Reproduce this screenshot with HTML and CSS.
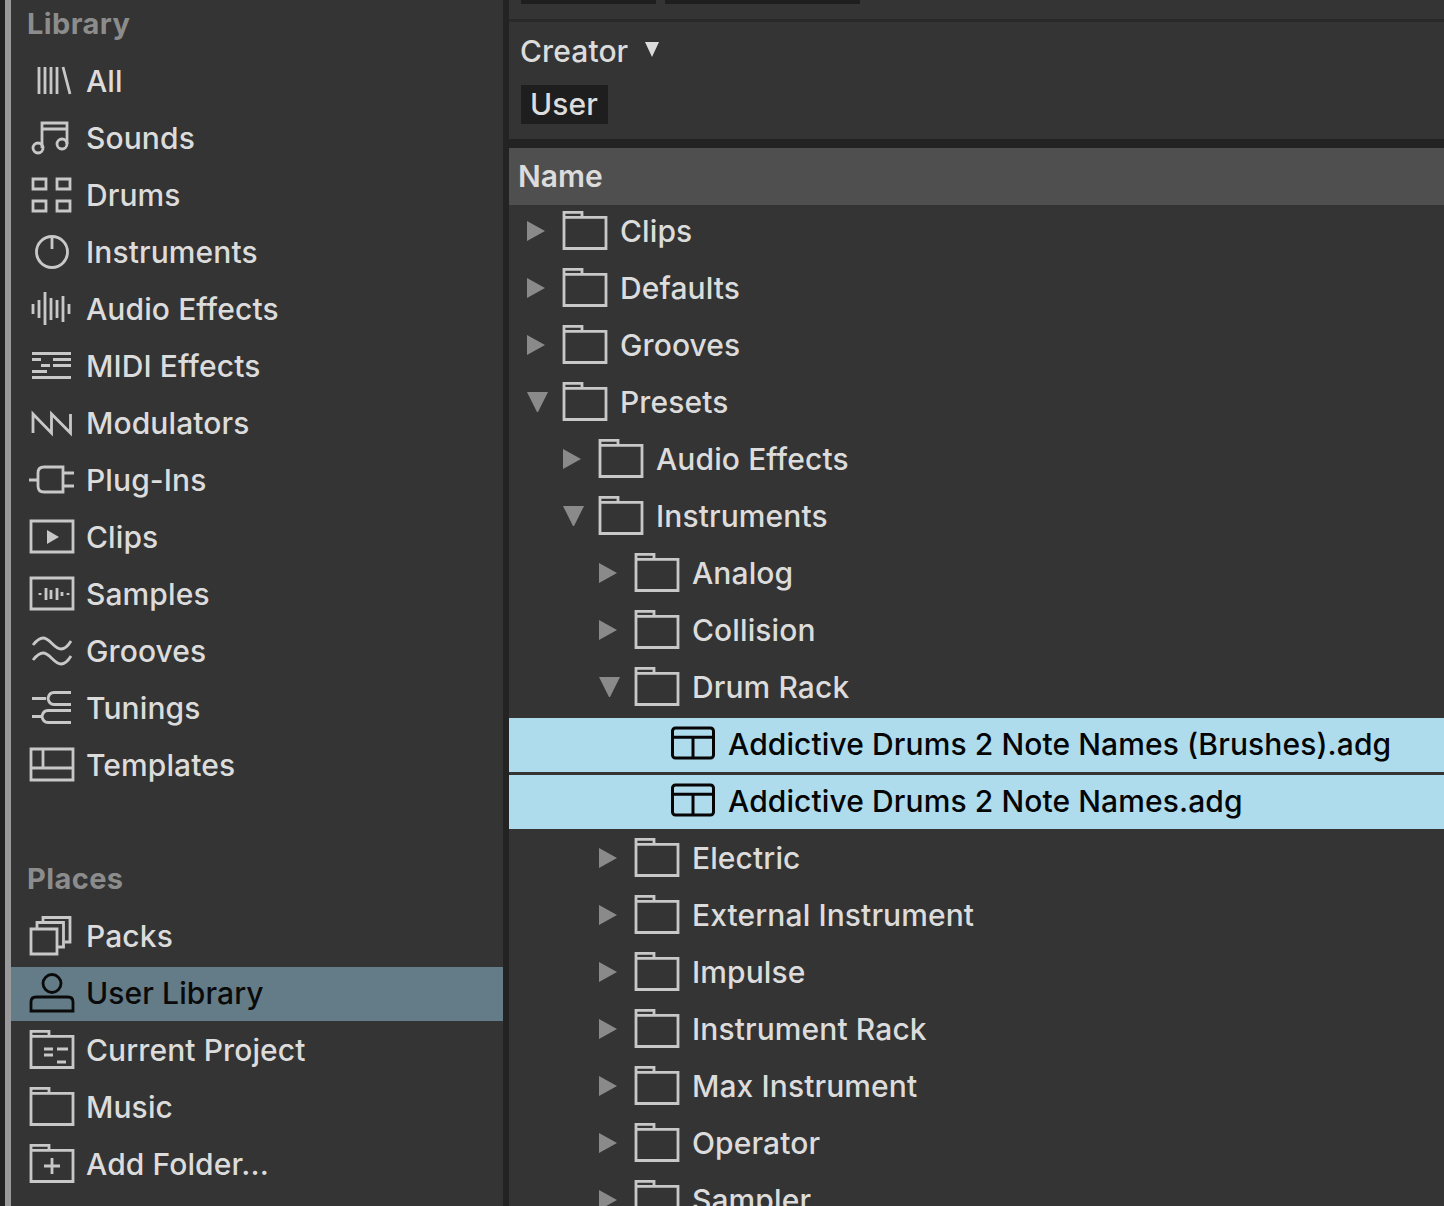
FILE: index.html
```html
<!DOCTYPE html>
<html lang="en">
<head>
  <meta charset="UTF-8" />
  <title>Browser</title>
  <link rel="stylesheet" href="styles.css">
</head>
<body>
  <svg class="defs" width="0" height="0">
    <symbol id="i-all" viewBox="0 0 44 40" overflow="visible"><path d="M9 6v27M15 6v27M21 6v27M27 6v27M33 6l7 27"/></symbol>
    <symbol id="i-sounds" viewBox="0 0 44 40" overflow="visible"><path d="M12 30V5h25v21M12 11h25"/><circle cx="8" cy="30" r="5"/><circle cx="32" cy="26" r="5"/></symbol>
    <symbol id="i-drums" viewBox="0 0 44 40" overflow="visible"><path d="M3 4h13v10H3zM27 4h13v10H27zM3 26h13v10H3zM27 26h13v10H27z"/></symbol>
    <symbol id="i-instr" viewBox="0 0 44 40" overflow="visible"><circle cx="22" cy="20" r="15.500"/><path d="M22 4v13"/></symbol>
    <symbol id="i-audio" viewBox="0 0 44 40" overflow="visible"><path d="M3 15v10M9 11v18M15 3v33M21 9v22M27 11v18M33 7v26M39 15v10"/></symbol>
    <symbol id="i-midi" viewBox="0 0 44 40" overflow="visible"><path d="M2 7.500h39M2 13.500h9M23 13.500h18M11 19.500h9M23 19.500h18M2 25.500h15M2 31.500h39"/></symbol>
    <symbol id="i-mod" viewBox="0 0 44 40" overflow="visible"><path d="M3 30V11l18.500 19V11l19 19V11"/></symbol>
    <symbol id="i-plug" viewBox="0 0 44 40" overflow="visible"><path d="M-1 20H8M33 7H14q-6 0-6 6v13q0 6 6 6h19zM33 13h11M33 26h11"/></symbol>
    <symbol id="i-clip" viewBox="0 0 44 40" overflow="visible"><path d="M1 4h42v31H1z"/><path class="solid" d="M17 13l12 7-12 7z"/></symbol>
    <symbol id="i-samples" viewBox="0 0 44 40" overflow="visible"><path d="M1 4h42v31H1z"/><path d="M10 19v2M16 14v12M21 16v9M27 14v12M32 18v4M38 19v2"/></symbol>
    <symbol id="i-grooves" viewBox="0 0 44 40" overflow="visible"><path d="M3 14C7 9 10 7 13 7c7 0 11 11 18 11 4 0 7-3 10-8M3 29c4-5 7-7 10-7 7 0 11 11 18 11 4 0 7-3 10-8"/></symbol>
    <symbol id="i-tunings" viewBox="0 0 44 40" overflow="visible"><path d="M2 10.500H16M41 4.500H24q-5 0-6 6 1 6 6 6h17M2 28.500H11M41 22.500H18q-5 0-6 6 1 6 6 6h23"/></symbol>
    <symbol id="i-templates" viewBox="0 0 44 40" overflow="visible"><path d="M1 4h42v31H1zM1 23h42M13 4v19"/></symbol>
    <symbol id="i-packs" viewBox="0 0 44 40" overflow="visible"><path d="M1 13h26v25H1z"/><path d="M7 12V6.500h26.500V31H28"/><path d="M13 5V1.500h27V26h-5"/></symbol>
    <symbol id="i-user" viewBox="0 0 44 40" overflow="visible"><circle cx="22" cy="10.500" r="9"/><path d="M1 38v-9q0-5 5-5h32q5 0 5 5v9z"/></symbol>
    <symbol id="i-project" viewBox="0 0 44 40" overflow="visible"><path d="M1 1.300h18v5H1zM1 6.300h42v31.200H1z"/><path d="M14 19h9M27 19h11M14 25h9M27 32h9"/></symbol>
    <symbol id="i-folder" viewBox="0 0 44 40" overflow="visible"><path d="M1 1.300h18v5H1zM1 6.300h42v31.200H1z"/></symbol>
    <symbol id="i-add" viewBox="0 0 44 40" overflow="visible"><path d="M1 1.300h18v5H1zM1 6.300h42v31.200H1z"/><path d="M22 14v16M14 22h16"/></symbol>
    <symbol id="i-rack" viewBox="0 0 44 40" overflow="visible"><rect x="1.500" y="4" width="41" height="30" rx="3"/><path d="M1.500 13.300h41M22 13.300V34"/></symbol>
  </svg>

  <div class="rail"></div>

  <aside class="sidebar">
    <h3 class="side-head">Library</h3>
    <a class="side-row"><svg class="icon"><use href="#i-all"/></svg>All</a>
    <a class="side-row"><svg class="icon"><use href="#i-sounds"/></svg>Sounds</a>
    <a class="side-row"><svg class="icon"><use href="#i-drums"/></svg>Drums</a>
    <a class="side-row"><svg class="icon"><use href="#i-instr"/></svg>Instruments</a>
    <a class="side-row"><svg class="icon"><use href="#i-audio"/></svg>Audio Effects</a>
    <a class="side-row"><svg class="icon"><use href="#i-midi"/></svg>MIDI Effects</a>
    <a class="side-row"><svg class="icon"><use href="#i-mod"/></svg>Modulators</a>
    <a class="side-row"><svg class="icon"><use href="#i-plug"/></svg>Plug-Ins</a>
    <a class="side-row"><svg class="icon"><use href="#i-clip"/></svg>Clips</a>
    <a class="side-row"><svg class="icon"><use href="#i-samples"/></svg>Samples</a>
    <a class="side-row"><svg class="icon"><use href="#i-grooves"/></svg>Grooves</a>
    <a class="side-row"><svg class="icon"><use href="#i-tunings"/></svg>Tunings</a>
    <a class="side-row"><svg class="icon"><use href="#i-templates"/></svg>Templates</a>

    <h3 class="side-head places">Places</h3>
    <a class="side-row"><svg class="icon"><use href="#i-packs"/></svg>Packs</a>
    <a class="side-row selected"><svg class="icon"><use href="#i-user"/></svg>User Library</a>
    <a class="side-row"><svg class="icon"><use href="#i-project"/></svg>Current Project</a>
    <a class="side-row"><svg class="icon"><use href="#i-folder"/></svg>Music</a>
    <a class="side-row"><svg class="icon"><use href="#i-add"/></svg>Add Folder...</a>
  </aside>

  <main class="browser">
    <div class="filters-top">
      <span class="stub stub-a"></span>
      <span class="stub stub-b"></span>
    </div>
    <section class="filter">
      <div class="filter-title">Creator <span class="filter-arrow"></span></div>
      <span class="chip">User</span>
    </section>
    <div class="col-head">Name</div>
    <ul class="tree">
      <li class="row d0"><i class="arrow"></i><svg class="icon"><use href="#i-folder"/></svg>Clips</li>
      <li class="row d0"><i class="arrow"></i><svg class="icon"><use href="#i-folder"/></svg>Defaults</li>
      <li class="row d0"><i class="arrow"></i><svg class="icon"><use href="#i-folder"/></svg>Grooves</li>
      <li class="row d0"><i class="arrow open"></i><svg class="icon"><use href="#i-folder"/></svg>Presets</li>
      <li class="row d1"><i class="arrow"></i><svg class="icon"><use href="#i-folder"/></svg>Audio Effects</li>
      <li class="row d1"><i class="arrow open"></i><svg class="icon"><use href="#i-folder"/></svg>Instruments</li>
      <li class="row d2"><i class="arrow"></i><svg class="icon"><use href="#i-folder"/></svg>Analog</li>
      <li class="row d2"><i class="arrow"></i><svg class="icon"><use href="#i-folder"/></svg>Collision</li>
      <li class="row d2"><i class="arrow open"></i><svg class="icon"><use href="#i-folder"/></svg>Drum Rack</li>
      <li class="row d3 picked"><i class="arrow none"></i><svg class="icon"><use href="#i-rack"/></svg>Addictive Drums 2 Note Names (Brushes).adg</li>
      <li class="row d3 picked"><i class="arrow none"></i><svg class="icon"><use href="#i-rack"/></svg>Addictive Drums 2 Note Names.adg</li>
      <li class="row d2"><i class="arrow"></i><svg class="icon"><use href="#i-folder"/></svg>Electric</li>
      <li class="row d2"><i class="arrow"></i><svg class="icon"><use href="#i-folder"/></svg>External Instrument</li>
      <li class="row d2"><i class="arrow"></i><svg class="icon"><use href="#i-folder"/></svg>Impulse</li>
      <li class="row d2"><i class="arrow"></i><svg class="icon"><use href="#i-folder"/></svg>Instrument Rack</li>
      <li class="row d2"><i class="arrow"></i><svg class="icon"><use href="#i-folder"/></svg>Max Instrument</li>
      <li class="row d2"><i class="arrow"></i><svg class="icon"><use href="#i-folder"/></svg>Operator</li>
      <li class="row d2"><i class="arrow"></i><svg class="icon"><use href="#i-folder"/></svg>Sampler</li>
    </ul>
  </main>
</body>
</html>
```

FILE: styles.css
```css
html, body {
  height: 100%;
}

body {
  margin: 0;
  display: flex;
  height: 1206px;
  overflow: hidden;
  background: #232323;
  color: #dcdcdc;
  font-family: Inter, "Noto Sans", sans-serif;
  font-size: 30px;
  font-weight: 500;
  letter-spacing: 0.1px;
}

.defs {
  position: absolute;
}

.icon {
  width: 44px;
  height: 40px;
  flex: none;
  fill: none;
  overflow: visible;
  stroke: #c8c8c8;
  stroke-width: 2.8;
}

.solid {
  fill: #c8c8c8;
  stroke: none;
}

.rail {
  width: 6px;
  margin-left: 5px;
  flex: none;
  background: #9a9a9a;
}

.sidebar {
  width: 492px;
  flex: none;
  background: #343434;
}

.side-head {
  margin: 0;
  height: 48px;
  padding: 0 0 7px 16px;
  line-height: 48px;
  font-size: 29px;
  font-weight: 700;
  letter-spacing: 0.4px;
  color: #8c8c8c;
}

.places {
  margin-top: 62px;
}

.side-row {
  display: flex;
  align-items: center;
  gap: 12px;
  box-sizing: border-box;
  height: 54px;
  margin-bottom: 3px;
  padding: 0 0 2px 19px;
}

.selected {
  background: #647c87;
  color: #0a0a0a;
}

.selected .icon {
  stroke: #0a0a0a;
}

.browser {
  margin-left: 6px;
  flex: 1;
  background: #343434;
}

.filters-top {
  display: flex;
  gap: 9px;
  height: 19px;
  padding-left: 12px;
  border-bottom: 3px solid #292929;
}

.stub {
  height: 4px;
  background: #1e1e1e;
}

.stub-a {
  width: 135px;
}

.stub-b {
  width: 195px;
}

.filter {
  height: 117px;
  padding-left: 12px;
  border-bottom: 9px solid #232323;
}

.filter-title {
  height: 63px;
  margin-left: -1px;
  line-height: 58px;
}

.filter-arrow {
  display: inline-block;
  margin-left: 9px;
  vertical-align: 5px;
  border-left: 7.500px solid transparent;
  border-right: 7.500px solid transparent;
  border-top: 15px solid #dcdcdc;
}

.chip {
  display: inline-block;
  height: 39px;
  padding: 0 10px 0 9px;
  line-height: 39px;
  background: #1e1e1e;
}

.col-head {
  height: 57px;
  padding-left: 9px;
  line-height: 57px;
  font-weight: 600;
  letter-spacing: 0;
  background: #4f4f4f;
}

.tree {
  list-style: none;
  margin: 0;
  padding: 0;
}

.row {
  display: flex;
  align-items: center;
  box-sizing: border-box;
  height: 54px;
  margin-bottom: 3px;
  padding-bottom: 2px;
  gap: 13px;
}

.d0 { padding-left: 18px; }
.d1 { padding-left: 54px; }
.d2 { padding-left: 90px; }
.d3 { padding-left: 126px; }

.arrow {
  width: 18px;
  margin-right: 5px;
  flex: none;
  height: 0;
  border-left: 18px solid #8a8a8a;
  border-top: 10px solid transparent;
  border-bottom: 10px solid transparent;
  box-sizing: border-box;
}

.arrow.open {
  width: 21px;
  margin-right: 2px;
  border-left: 10.500px solid transparent;
  border-right: 10.500px solid transparent;
  border-top: 20px solid #8a8a8a;
  border-bottom: 0;
}

.arrow.none {
  border-color: transparent;
}

.picked {
  background: #aedcec;
  color: #050505;
}

.picked .icon {
  stroke: #050505;
  stroke-width: 3;
}
```
